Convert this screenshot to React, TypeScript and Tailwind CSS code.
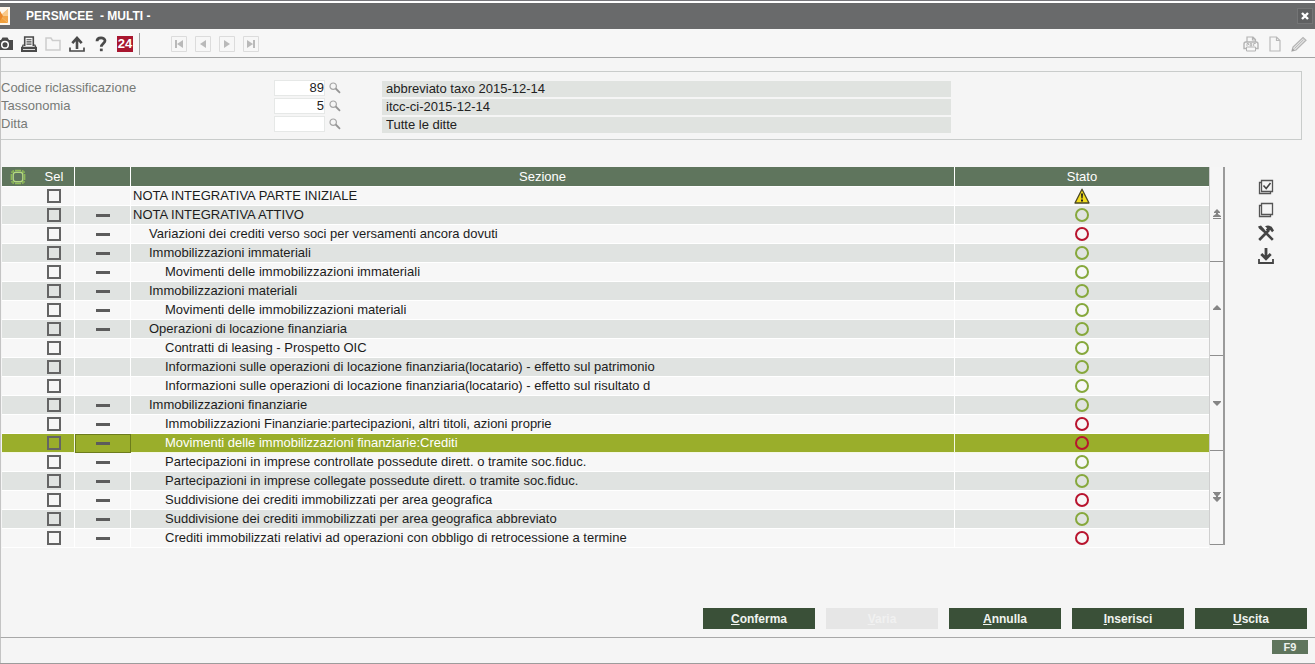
import React, { useState } from "react";

type Status = "warning" | "ok" | "error";

type Section = {
  title: string;
  level: number;
  status: Status;
  dash: boolean;
};

const sections: Section[] = [
  { title: "NOTA INTEGRATIVA PARTE INIZIALE", level: 0, status: "warning", dash: false },
  { title: "NOTA INTEGRATIVA ATTIVO", level: 0, status: "ok", dash: true },
  { title: "Variazioni dei crediti verso soci per versamenti ancora dovuti", level: 1, status: "error", dash: true },
  { title: "Immobilizzazioni immateriali", level: 1, status: "ok", dash: true },
  { title: "Movimenti delle immobilizzazioni immateriali", level: 2, status: "ok", dash: true },
  { title: "Immobilizzazioni materiali", level: 1, status: "ok", dash: true },
  { title: "Movimenti delle immobilizzazioni materiali", level: 2, status: "ok", dash: true },
  { title: "Operazioni di locazione finanziaria", level: 1, status: "ok", dash: true },
  { title: "Contratti di leasing - Prospetto OIC", level: 2, status: "ok", dash: false },
  { title: "Informazioni sulle operazioni di locazione finanziaria(locatario) - effetto sul patrimonio", level: 2, status: "ok", dash: false },
  { title: "Informazioni sulle operazioni di locazione finanziaria(locatario) - effetto sul risultato d", level: 2, status: "ok", dash: false },
  { title: "Immobilizzazioni finanziarie", level: 1, status: "ok", dash: true },
  { title: "Immobilizzazioni Finanziarie:partecipazioni, altri titoli, azioni proprie", level: 2, status: "error", dash: true },
  { title: "Movimenti delle immobilizzazioni finanziarie:Crediti", level: 2, status: "error", dash: true },
  { title: "Partecipazioni in imprese controllate possedute dirett. o tramite soc.fiduc.", level: 2, status: "ok", dash: true },
  { title: "Partecipazioni in imprese collegate possedute dirett. o tramite soc.fiduc.", level: 2, status: "ok", dash: true },
  { title: "Suddivisione dei crediti immobilizzati per area geografica", level: 2, status: "error", dash: true },
  { title: "Suddivisione dei crediti immobilizzati per area geografica abbreviato", level: 2, status: "ok", dash: true },
  { title: "Crediti immobilizzati relativi ad operazioni con obbligo di retrocessione a termine", level: 2, status: "error", dash: true },
];

const fields = [
  { id: "codice", label: "Codice riclassificazione", value: "89", text: "abbreviato taxo 2015-12-14" },
  { id: "tassonomia", label: "Tassonomia", value: "5", text: "itcc-ci-2015-12-14" },
  { id: "ditta", label: "Ditta", value: "", text: "Tutte le ditte" },
];

const actions = [
  { label: "Conferma", disabled: false },
  { label: "Varia", disabled: true },
  { label: "Annulla", disabled: false },
  { label: "Inserisci", disabled: false },
  { label: "Uscita", disabled: false },
];

const indents = ["pl-[2px]", "pl-[18px]", "pl-[34px]"];

type IconProps = { children: React.ReactNode; className?: string };

const Icon = ({ children, className = "" }: IconProps) => (
  <svg viewBox="0 0 16 16" className={`block h-4 w-4 shrink-0 ${className}`} fill="none" aria-hidden="true">
    {children}
  </svg>
);

type ToolProps = { label: string; children: React.ReactNode };

const Tool = ({ label, children }: ToolProps) => (
  <button type="button" aria-label={label} className="flex h-6 w-6 shrink-0 items-center justify-center">
    {children}
  </button>
);

const StatusIcon = ({ status }: { status: Status }) => {
  if (status === "warning") {
    return (
      <Icon className="mx-auto">
        <path d="M8 1.2 15 15H1Z" fill="#f2dc1c" stroke="#4a4726" strokeWidth="1.3" strokeLinejoin="round" />
        <path d="M7 5.5h2l-.4 5H7.4Z M7 11.6h2v2H7Z" fill="#222" />
      </Icon>
    );
  }
  return (
    <Icon className="mx-auto">
      <circle cx="8" cy="8" r="6" stroke={status === "ok" ? "#86a83c" : "#b8142e"} strokeWidth="2" />
    </Icon>
  );
};

const TitleBar = () => (
  <header className="border-t border-[#77777c] bg-white pt-[2px]">
    <div className="flex h-[26px] items-center bg-[#696a6b] pr-[2px]">
      <svg viewBox="0 0 10 18" className="block h-[18px] w-[10px]" aria-hidden="true">
        <path d="M0 0h10v18H0Z" fill="#fdf6ec" />
        <path d="M8 2v14L0 9Z" fill="#f3a547" />
        <path d="M8 2v7H0Z" fill="#f9c98a" />
        <path d="M0 9v7h8Z" fill="#f0a03c" />
        <path d="M0 4v10l3-5Z" fill="#e9872a" />
      </svg>
      <h1 className="flex-1 pl-4 text-[12px] font-bold whitespace-pre text-white">{"PERSMCEE  - MULTI -"}</h1>
      <button
        type="button"
        aria-label="Chiudi"
        className="flex h-4 w-4 items-center justify-center border border-[#747576] bg-[#5f6061]"
      >
        <svg viewBox="0 0 8 8" className="block h-2 w-2" aria-hidden="true">
          <path d="M1 1 7 7M7 1 1 7" stroke="#fff" strokeWidth="2.4" />
        </svg>
      </button>
    </div>
  </header>
);

const Toolbar = () => (
  <div className="flex h-[29px] items-center justify-between overflow-hidden border-b border-[#a3a4a4] bg-[#f7f7f7] pt-px pr-1">
    <div className="-ml-[7px] flex items-center">
      <Tool label="Istantanea">
        <Icon>
          <path d="M0 4h4l1.5-2.500h5L12 4h4v10H0Z" fill="#4a4a4a" />
          <circle cx="8" cy="8.8" r="3.3" stroke="#fff" strokeWidth="1.5" />
        </Icon>
      </Tool>
      <Tool label="Stampa">
        <Icon>
          <path d="M3.7 10V1h8.6v9" stroke="#4a4a4a" strokeWidth="1.6" />
          <path d="M5.5 3.7h5M5.5 5.9h5M5.5 8.1h5" stroke="#4a4a4a" strokeWidth="1.1" />
          <path d="M2.5 8.5 1 11.5h14L13.5 8.5" stroke="#4a4a4a" strokeWidth="1.4" />
          <path d="M0 11h16v5H0Z" fill="#4a4a4a" />
          <path d="M2 13.5h12" stroke="#ddd" strokeWidth="1" />
        </Icon>
      </Tool>
      <Tool label="Apri">
        <Icon>
          <path d="M1 14V2h5l1.5 2.5H15V14Z" stroke="#cdcdcd" strokeWidth="1.5" />
        </Icon>
      </Tool>
      <Tool label="Carica">
        <Icon>
          <path d="M8 13V3M3.3 7.2 8 2l4.7 5.2" stroke="#4a4a4a" strokeWidth="2.6" />
          <path d="M1 11.5V15h14v-3.5" stroke="#4a4a4a" strokeWidth="1.7" />
        </Icon>
      </Tool>
      <Tool label="Aiuto">
        <Icon>
          <path d="M4 5.2C4 .8 12 .8 12 4.8c0 2.5-3.7 3-3.7 6" stroke="#4a4a4a" strokeWidth="2.8" />
          <path d="M6.900 12.6h2.8v2.6H6.900Z" fill="#4a4a4a" />
        </Icon>
      </Tool>
      <button type="button" className="mx-1 h-4 w-4 bg-[#a8162f] text-center text-[13px] leading-4 font-bold text-white">
        24
      </button>
      <div className="mr-[27px] ml-[2px] h-[22px] w-px bg-[#a0a0a0]" />
      <Tool label="Primo">
        <Icon>
          <path d="M.5.5h15v15H.5Z" stroke="#dcdcdc" />
          <path d="M4 4h2v8H4ZM12 4v8L6 8Z" fill="#b9b9b9" />
        </Icon>
      </Tool>
      <Tool label="Precedente">
        <Icon>
          <path d="M.5.5h15v15H.5Z" stroke="#dcdcdc" />
          <path d="M11 4v8L5 8Z" fill="#b9b9b9" />
        </Icon>
      </Tool>
      <Tool label="Successivo">
        <Icon>
          <path d="M.5.5h15v15H.5Z" stroke="#dcdcdc" />
          <path d="M5 4v8l6-4Z" fill="#b9b9b9" />
        </Icon>
      </Tool>
      <Tool label="Ultimo">
        <Icon>
          <path d="M.5.5h15v15H.5Z" stroke="#dcdcdc" />
          <path d="M10 4h2v8h-2ZM4 4v8l6-4Z" fill="#b9b9b9" />
        </Icon>
      </Tool>
    </div>
    <div className="flex items-center">
      <Tool label="Stampa PDF">
        <Icon>
          <path d="M4 6V1h6l2.500 2.5V6M9.500 1v3h3" stroke="#b4b4b4" strokeWidth="1.2" />
          <path d="M3 12.5H1V8q0-2 2-2h10q2 0 2 2v4.5h-2" stroke="#b4b4b4" strokeWidth="1.4" />
          <path d="M3.5 11h9v4h-9ZM4 10V7.500h1.5V9M7.200 10V7.500h1.5V10ZM10.7 10V7.500h2" stroke="#b4b4b4" />
        </Icon>
      </Tool>
      <Tool label="Nuovo">
        <Icon>
          <path d="M3 1h6.500L13 4.500V15H3ZM9.500 1v3.500H13" stroke="#b9b9b9" strokeWidth="1.200" />
        </Icon>
      </Tool>
      <Tool label="Modifica">
        <Icon>
          <path d="m1 15 1-4L12 1.500 15 4.300 5 14Z" fill="#e2e2e2" stroke="#b4b4b4" strokeWidth="1.2" />
          <path d="m3.500 12.500 9-8.800" stroke="#b9b9b9" />
          <path d="m1 15 .6-2.600 2 1.900Z" fill="#999" />
        </Icon>
      </Tool>
    </div>
  </div>
);

const FilterPanel = () => (
  <section className="mt-[13px] mr-[13px] flex flex-col border-y border-r border-[#c9cccb] pt-[7px] pb-[6px] text-[13px]">
    {fields.map((field) => (
      <div key={field.id} className="flex h-[18px] items-center">
        <label htmlFor={field.id} className="w-[273px] shrink-0 leading-4 text-[#777a77]">
          {field.label}
        </label>
        <input
          id={field.id}
          defaultValue={field.value}
          className="h-4 w-[51px] border border-[#e6e8e7] bg-white text-right leading-4 text-[#222] outline-none"
        />
        <button type="button" aria-label={`Cerca ${field.label}`} className="mr-[41px] ml-1 h-3 w-3">
          <svg viewBox="0 0 12 12" className="block h-3 w-3" fill="none" aria-hidden="true">
            <circle cx="4.2" cy="4.2" r="3.2" stroke="#a5a5a5" strokeWidth="1.2" />
            <path d="m6.700 6.500 4.300 4.300" stroke="#959595" strokeWidth="1.8" />
          </svg>
        </button>
        <input
          readOnly
          aria-label={`Descrizione ${field.label}`}
          value={field.text}
          className="mt-[2px] h-4 max-w-[569px] flex-1 bg-[#e0e3e0] pl-1 leading-4 text-[#222] outline-none"
        />
      </div>
    ))}
  </section>
);

const SectionTable = ({ selected, onSelect }: { selected: number; onSelect: (row: number) => void }) => (
  <table className="w-full flex-1 table-fixed border-separate border-spacing-0 text-[13px] leading-[18px] text-[#1c1c1c]">
    <colgroup>
      <col className="w-[32px]" />
      <col className="w-[41px]" />
      <col className="w-[56px]" />
      <col />
      <col className="w-[254px]" />
    </colgroup>
    <thead>
      <tr className="h-5 text-white [&>th]:border-b [&>th]:border-white [&>th]:bg-[#5f755d] [&>th]:p-0 [&>th]:font-normal">
        <th>
          <Icon className="mx-auto">
            <rect x="3.200" y="3.200" width="9.600" height="9.600" rx="2.500" stroke="#b4d880" strokeWidth="1.400" />
            <path
              d="M5 1.300h6M5 14.700h6M1.300 5v6M14.700 5v6M3.200 1v2.200H1M12.800 1v2.200H15M3.200 15v-2.200H1M12.800 15v-2.200H15"
              stroke="#8fbd56"
              strokeWidth="1.300"
            />
          </Icon>
        </th>
        <th className="border-r">Sel</th>
        <th className="border-r" aria-label="Tipo" />
        <th className="border-r">Sezione</th>
        <th>Stato</th>
      </tr>
    </thead>
    <tbody>
      {sections.map((section, i) => {
        const active = i === selected;
        const bg = active
          ? "bg-[#9aae2b] text-white [&>td]:border-[#f4f8e4]"
          : i % 2
            ? "bg-[#e0e3e1] [&>td]:border-white"
            : "bg-[#f7f7f7] [&>td]:border-white";
        return (
          <tr key={section.title} onClick={() => onSelect(i)} className={`h-[19px] [&>td]:border-b [&>td]:p-0 ${bg}`}>
            <td />
            <td className="border-r">
              <input
                type="checkbox"
                aria-label={section.title}
                className="mx-auto block h-[14px] w-[14px] appearance-none border-2 border-[#646464] checked:bg-[#646464]"
              />
            </td>
            <td className={`border-r ${active ? "outline -outline-offset-1 outline-[#6c7c1c]" : ""}`}>
              {section.dash && <div className="mx-auto h-[3px] w-[14px] bg-[#5c5c5c]" />}
            </td>
            <td className="border-r">
              <span className={`block truncate ${indents[section.level]}`}>{section.title}</span>
            </td>
            <td>
              <StatusIcon status={section.status} />
            </td>
          </tr>
        );
      })}
    </tbody>
  </table>
);

const scrollSteps = [
  { label: "Inizio", path: "M5 0 8 3v1H6v1l3 2v1H1V7l3-2V4H2V3ZM1 9h8v1H1Z" },
  { label: "Su", path: "M5 2l4 4v1H1V6Z" },
  { label: "Giù", path: "M5 8 1 4V3h8v1Z" },
  { label: "Fine", path: "M5 10 2 7 1 6V5h3V4L2 2V1H1V0h8v1H8v1L6 4v1h3v1L8 7Z" },
];

const ScrollBar = () => (
  <div className="mb-[3px] flex w-4 shrink-0 flex-col border-r-2 border-l border-r-[#9a9a9a] border-l-[#cfcfcf]">
    {scrollSteps.map((step) => (
      <button
        key={step.label}
        type="button"
        aria-label={step.label}
        className="flex flex-1 items-center justify-center border-b border-[#8e8e8e] bg-[#f6f6f6]"
      >
        <svg viewBox="0 0 10 10" className="block h-[10px] w-[10px]" aria-hidden="true">
          <path d={step.path} fill="#858585" />
        </svg>
      </button>
    ))}
  </div>
);

const SideTools = () => (
  <aside className="flex w-[90px] shrink-0 flex-col items-center gap-[7px] pt-3 pr-2">
    <button type="button" aria-label="Seleziona tutto">
      <Icon>
        <path d="M3.500 1.500h11v11h-11Z" stroke="#555" strokeWidth="1.300" />
        <path d="M3 3.500H1.500v11h11V13" stroke="#555" strokeWidth="1.300" />
        <path d="m5.500 6.500 2.700 3L12.500 4" stroke="#444" strokeWidth="1.600" />
      </Icon>
    </button>
    <button type="button" aria-label="Deseleziona tutto">
      <Icon>
        <path d="M3.500 1.500h11v11h-11Z" stroke="#555" strokeWidth="1.300" />
        <path d="M3 3.500H1.500v11h11V13" stroke="#555" strokeWidth="1.300" />
      </Icon>
    </button>
    <button type="button" aria-label="Strumenti">
      <Icon>
        <path d="M1.200 15 11 5M4.500 4.500 14.800 14.800" stroke="#444" strokeWidth="2.600" />
        <path d="M7 1.200q4-2 7 1l2 3.300-1.900 1.700-2-2.200-2 1.700L7.800 4.500l1.400-1.300Z" fill="#444" />
        <path d="M0 1.500 3 .5l3.500 4L4.500 6.500 1 3.500Z" fill="#444" />
      </Icon>
    </button>
    <button type="button" aria-label="Scarica">
      <Icon>
        <path d="M8 0v9M3.300 6 8 10.700 12.700 6" stroke="#444" strokeWidth="2.800" />
        <path d="M1 11v4h14v-4" stroke="#444" strokeWidth="1.800" />
      </Icon>
    </button>
  </aside>
);

const App = () => {
  const [selected, setSelected] = useState(13);

  return (
    <div className="flex min-h-screen flex-col border-b border-[#9c9c9c] bg-[#f5f5f5] font-['Liberation_Sans',Arial,sans-serif]">
      <TitleBar />
      <Toolbar />
      <main className="flex flex-1 flex-col border-l border-[#c4c4c4]">
        <FilterPanel />
        <div className="mt-[27px] flex pl-px">
          <SectionTable selected={selected} onSelect={setSelected} />
          <ScrollBar />
          <SideTools />
        </div>
        <div className="mt-auto flex justify-end gap-[11px] pr-2 pb-2">
          {actions.map((action) => (
            <button
              key={action.label}
              type="button"
              disabled={action.disabled}
              className="h-[21px] w-28 bg-[#3a5038] text-[12px] font-bold text-[#f0f3ef] disabled:bg-[#e6e6e6] disabled:text-[#f1f1f1]"
            >
              <span className="underline">{action.label[0]}</span>
              {action.label.slice(1)}
            </button>
          ))}
        </div>
      </main>
      <footer className="flex h-[26px] items-start justify-end border-t border-l border-t-[#a8a8a8] border-l-[#c4c4c4] pt-[2px] pr-[7px]">
        <button type="button" className="h-[14px] w-9 bg-[#5f755d] text-[11px] leading-[14px] font-bold text-[#eef2ed]">
          F9
        </button>
      </footer>
    </div>
  );
};

export default App;
